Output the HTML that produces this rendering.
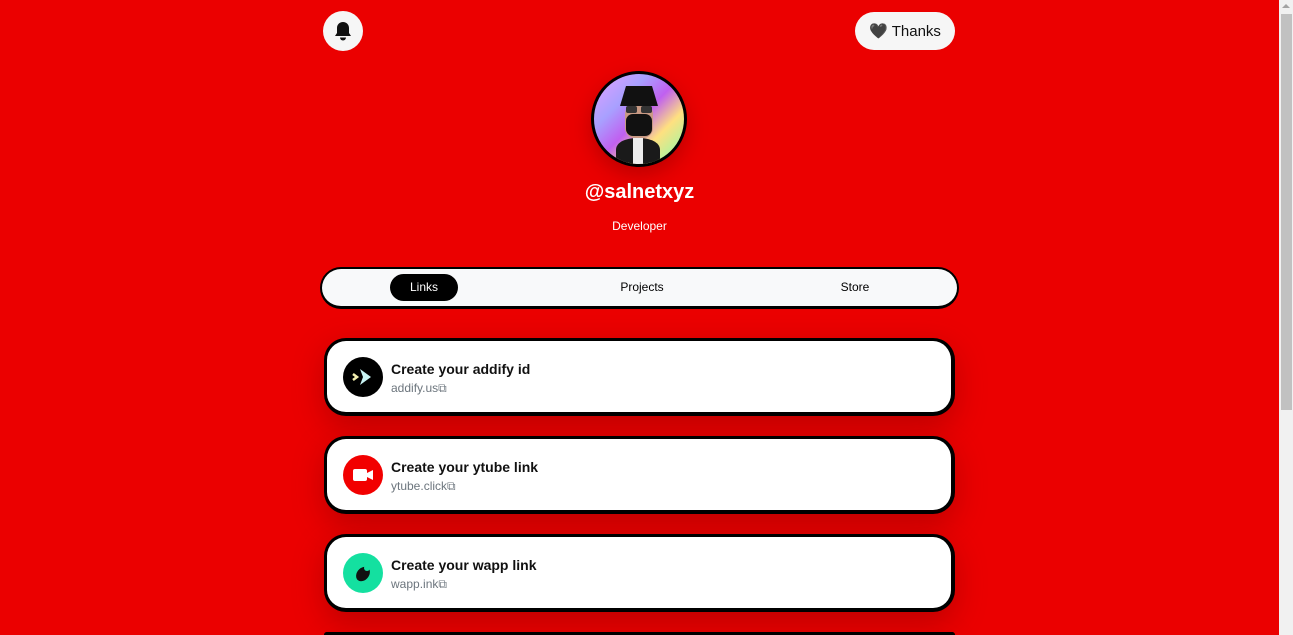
<!DOCTYPE html>
<html style="overflow:hidden;height:635px"><head><meta charset="utf-8"><style>
*{box-sizing:border-box;margin:0;padding:0}
body{width:1293px;height:635px;overflow:hidden;background:#eb0000;font-family:"Liberation Sans",sans-serif;position:relative}
.sb{position:absolute;right:0;top:0;width:14px;height:635px;background:#f1f1f1;z-index:5}
.sb .th{position:absolute;left:2px;right:1px;top:14px;height:396px;background:#c1c1c1}
.sb .ar{position:absolute;left:3px;top:4px;border:4px solid transparent;border-bottom:4px solid #a3a3a3;border-top:0}
.bell{position:absolute;left:323px;top:11px;width:40px;height:40px;border-radius:50%;background:#f6f6f6}
.thanks{position:absolute;left:855px;top:12px;width:100px;height:38px;border-radius:19px;background:#f6f6f6;font-size:15px;color:#111;display:flex;align-items:center;justify-content:center;gap:4px}
.av{position:absolute;left:591px;top:71px;width:96px;height:96px;border-radius:50%;border:3px solid #000;overflow:hidden;background:linear-gradient(135deg,#e6a0ff,#a8a0ff 30%,#c060f0 50%,#ffe080 70%,#80ffb0);box-shadow:0 8px 20px rgba(120,0,0,.4)}
.name{position:absolute;left:0;width:1279px;text-align:center;top:181px;color:#fff;font-weight:bold;font-size:20px}
.dev{position:absolute;left:0;width:1279px;text-align:center;top:219px;color:#fff;font-size:12px}
.tabs{position:absolute;left:320px;top:267px;width:639px;height:42px;border:2px solid #000;border-bottom-width:3px;border-radius:21px;background:#f8f9fa;font-size:12px}
.tabs span{position:absolute;top:5px;height:27px;line-height:27px;text-align:center}
.card{position:absolute;left:324px;width:631px;height:78px;background:#fff;border:3px solid #000;border-bottom-width:4px;border-right-width:4px;border-radius:22px;box-shadow:0 10px 30px rgba(110,0,0,.35)}
.ic{position:absolute;left:16px;top:16px;width:40px;height:40px;border-radius:50%}
.t{position:absolute;left:64px;top:20px;font-weight:bold;font-size:14px;color:#111}
.u{position:absolute;left:64px;top:40px;font-size:12px;color:#6c757d}
</style></head><body>
<div class="sb"><div class="ar"></div><div class="th"></div></div>
<div class="bell"><svg width="40" height="40" viewBox="0 0 40 40"><path d="M20 11c-3.5 0-6 2.5-6 6v5l-2 3h16l-2-3v-5c0-3.5-2.5-6-6-6z" fill="#111"/><path d="M17 26.5a3 3 0 0 0 6 0z" fill="#111"/></svg></div>
<div class="thanks"><span style="font-size:15px;color:#333">&#x1F5A4;</span><span>Thanks</span></div>
<div class="av"><svg width="90" height="90" viewBox="0 0 90 90"><path d="M22 90v-14c0-8 10-12 22-12s22 4 22 12v14z" fill="#1a1a1a"/><rect x="39" y="64" width="10" height="26" fill="#eee"/><rect x="31" y="30" width="28" height="34" rx="10" fill="#c89a84"/><rect x="32" y="40" width="26" height="22" rx="7" fill="#111"/><rect x="32" y="32" width="11" height="7" rx="2" fill="#333"/><rect x="47" y="32" width="11" height="7" rx="2" fill="#333"/><path d="M26 32l6-20h26l6 20z" fill="#111"/></svg></div>
<div class="name">@salnetxyz</div>
<div class="dev">Developer</div>
<div class="tabs"><span style="left:68px;width:68px;background:#000;color:#fff;border-radius:14px">Links</span><span style="left:280px;width:80px">Projects</span><span style="left:498px;width:70px">Store</span></div>
<div class="card" style="top:338px"><div class="ic" style="background:#000"><svg width="40" height="40" viewBox="0 0 40 40"><path d="M17 12l11 8-11 8 3-8z" fill="#c8f4f4"/><path d="M10 17l4 3-4 3" stroke="#f4f0b0" stroke-width="2.5" fill="none"/></svg></div><div class="t">Create your addify id</div><div class="u">addify.us&#x29C9;</div></div>
<div class="card" style="top:436px"><div class="ic" style="background:#f20000"><svg width="40" height="40" viewBox="0 0 40 40"><rect x="10" y="14" width="14" height="12" rx="2" fill="#fff"/><path d="M24 18l6-3v10l-6-3z" fill="#fff"/></svg></div><div class="t">Create your ytube link</div><div class="u">ytube.click&#x29C9;</div></div>
<div class="card" style="top:534px"><div class="ic" style="background:#14e0a0"><svg width="40" height="40" viewBox="0 0 40 40"><ellipse cx="20" cy="21" rx="6" ry="8" transform="rotate(40 20 21)" fill="#111"/><circle cx="24" cy="15" r="3" fill="#14e0a0"/></svg></div><div class="t">Create your wapp link</div><div class="u">wapp.ink&#x29C9;</div></div>
<div class="card" style="top:632px;height:3px;border-bottom:0;border-radius:22px 22px 0 0"></div>
</body></html>
